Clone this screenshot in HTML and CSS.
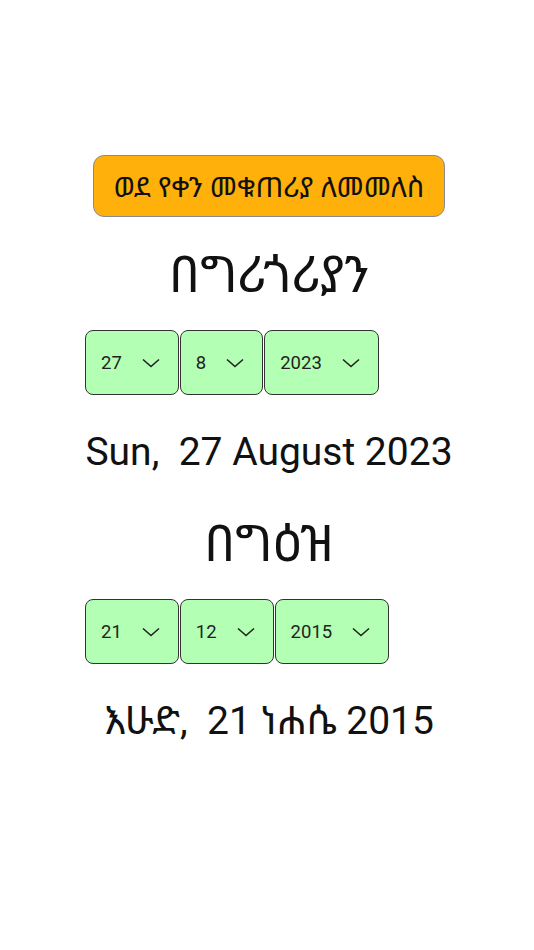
FILE: index.html
```html
<!DOCTYPE html>
<html lang="am">
<head>
    <meta charset="UTF-8">
    <meta name="viewport" content="width=device-width, initial-scale=1.0">
    <title>የቀን መቁጠሪያ</title>
    <link rel="stylesheet" href="styles.css">
</head>
<body>
    <div class="page">
        <button class="back-button">ወደ የቀን መቁጠሪያ ለመመለስ</button>

        <h1 class="calendar-title">በግሪጎሪያን</h1>
        <div class="picker-row">
            <div class="picker"><span>27</span><svg class="chevron" viewBox="0 0 18 10"><path d="M1 1.5 L9 8.5 L17 1.5"/></svg></div>
            <div class="picker"><span>8</span><svg class="chevron" viewBox="0 0 18 10"><path d="M1 1.5 L9 8.5 L17 1.5"/></svg></div>
            <div class="picker"><span>2023</span><svg class="chevron" viewBox="0 0 18 10"><path d="M1 1.5 L9 8.5 L17 1.5"/></svg></div>
        </div>
        <p class="date-text">Sun,  27 August 2023</p>

        <h1 class="calendar-title">በግዕዝ</h1>
        <div class="picker-row">
            <div class="picker"><span>21</span><svg class="chevron" viewBox="0 0 18 10"><path d="M1 1.5 L9 8.5 L17 1.5"/></svg></div>
            <div class="picker"><span>12</span><svg class="chevron" viewBox="0 0 18 10"><path d="M1 1.5 L9 8.5 L17 1.5"/></svg></div>
            <div class="picker"><span>2015</span><svg class="chevron" viewBox="0 0 18 10"><path d="M1 1.5 L9 8.5 L17 1.5"/></svg></div>
        </div>
        <p class="date-text">እሁድ,  21 ነሐሴ 2015</p>
    </div>
</body>
</html>
```

FILE: styles.css
```css
body, html {
    margin: 0;
    padding: 0;
    background-color: #ffffff;
    color: #111111;
    font-family: Roboto, "Noto Sans Ethiopic", sans-serif;
}
body {
    padding-left: 4px;
}
.page {
    width: 368px;
    margin: 0 auto;
    padding-top: 155px;
    display: flex;
    flex-direction: column;
    align-items: center;
}
.back-button {
    width: 352px;
    height: 62px;
    background-color: #ffb00a;
    border: 1px solid #8a8a8a;
    border-radius: 11px;
    font-family: inherit;
    font-size: 28.5px;
    color: #111111;
    cursor: pointer;
}
.calendar-title {
    margin: 28px 0 25px;
    font-size: 50px;
    font-weight: normal;
    line-height: 60px;
}
.picker-row {
    align-self: flex-start;
    display: flex;
    gap: 1px;
}
.picker {
    height: 63px;
    display: flex;
    align-items: center;
    gap: 20px;
    padding: 0 18px 0 15px;
    background-color: #b3ffb3;
    border: 1px solid #333333;
    border-radius: 8px;
    font-size: 18.5px;
    color: #222222;
}
.chevron {
    width: 18px;
    height: 10px;
    fill: none;
    stroke: #222222;
    stroke-width: 1.6;
}
.date-text {
    margin: 31px 0 8px;
    font-size: 39px;
    white-space: pre;
    line-height: 52px;
}
```
